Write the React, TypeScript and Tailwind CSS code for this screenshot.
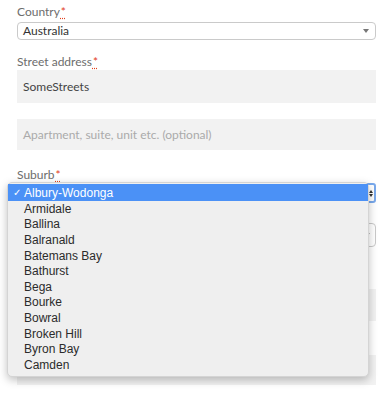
const suburbs = [
  "Armidale",
  "Ballina",
  "Balranald",
  "Batemans Bay",
  "Bathurst",
  "Bega",
  "Bourke",
  "Bowral",
  "Broken Hill",
  "Byron Bay",
  "Camden",
];

function Req() {
  return (
    <abbr
      title="required"
      className="ml-[1px] text-[#e2401c] underline decoration-dotted decoration-[#e2401c] underline-offset-2"
    >
      *
    </abbr>
  );
}

function Label({ text }: { text: string }) {
  return (
    <label className="block h-[16px] text-[12px] leading-[16px] text-[#6d6d6d]">
      {text}
      <Req />
    </label>
  );
}

export default function App() {
  return (
    <div className="relative h-[397px] w-[387px] overflow-hidden bg-white font-['Lato',sans-serif]">
      <div className="flex flex-col px-[17px] pr-[11px] pt-[4px]">
        <Label text="Country" />
        <div className="mt-[2px] flex h-[18px] items-center justify-between rounded-[4px] border border-[#cacaca] bg-white pl-[5px] pr-[6px]">
          <span className="text-[12px] text-[#333]">Australia</span>
          <span className="h-0 w-0 border-x-[3px] border-t-[4px] border-x-transparent border-t-[#777]" />
        </div>

        <div className="mt-[14px]">
          <Label text="Street address" />
        </div>
        <div className="flex h-[33px] items-center bg-[#f2f2f2] px-[6px] text-[12px] text-[#444]">
          SomeStreets
        </div>
        <div className="mt-[16px] flex h-[31px] items-center bg-[#f2f2f2] px-[6px] text-[12px] text-[#aaa]">
          Apartment, suite, unit etc. (optional)
        </div>

        <div className="mt-[17px]">
          <Label text="Suburb" />
        </div>
        <div className="flex h-[20px] items-center justify-end rounded-[3px] border-2 border-[#79a9ec] bg-white pr-[1px]">
          <div className="flex flex-col items-center gap-[1px]">
            <span className="h-0 w-0 border-x-[2px] border-b-[3px] border-x-transparent border-b-[#333]" />
            <span className="h-0 w-0 border-x-[2px] border-t-[3px] border-x-transparent border-t-[#333]" />
          </div>
        </div>

        <div className="mt-[20px] flex h-[24px] items-center justify-end rounded-[4px] border border-[#cacaca] bg-white pr-[5px]">
          <span className="h-0 w-0 border-x-[3px] border-t-[4px] border-x-transparent border-t-[#999]" />
        </div>
        <div className="mt-[15px] h-[16px]" />
        <div className="mt-[11px] h-[32px] bg-[#f2f2f2]" />
        <div className="mt-[18px] h-[16px]" />
        <div className="h-[30px] bg-[#f2f2f2]" />
      </div>

      <div className="absolute left-[7px] top-[182px] h-[195px] w-[362px] rounded-[5px] border border-[#d4d4d4] bg-[#efefef] py-[1px] font-['Liberation_Sans',Arial,sans-serif] text-[12px] shadow-[0_3px_8px_rgba(0,0,0,0.25)]">
        <div className="flex h-[17px] items-center bg-[#4b91f6] pl-[5px] text-white">
          <span className="w-[11px] text-[10px] leading-none">✓</span>
          <span>Albury-Wodonga</span>
        </div>
        {suburbs.map((s) => (
          <div key={s} className="flex h-[15.6px] items-center pl-[16px] text-[#2b2b2b]">
            {s}
          </div>
        ))}
      </div>
    </div>
  );
}
